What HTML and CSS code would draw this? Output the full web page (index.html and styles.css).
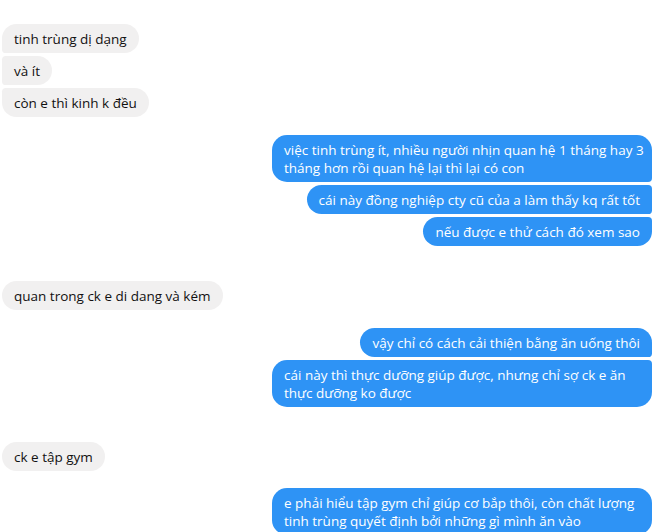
FILE: index.html
```html
<!DOCTYPE html>
<html lang="vi">
<head>
<meta charset="utf-8">
<link rel="stylesheet" href="styles.css">
</head>
<body>
<div class="chat">
  <div class="group them g1">
    <div class="msg">tinh trùng dị dạng</div>
    <div class="msg">và ít</div>
    <div class="msg">còn e thì kinh k đều</div>
  </div>
  <div class="group me g2">
    <div class="msg wide">việc tinh trùng ít, nhiều người nhịn quan hệ 1 tháng hay 3<br>tháng hơn rồi quan hệ lại thì lại có con</div>
    <div class="msg">cái này đồng nghiệp cty cũ của a làm thấy kq rất tốt</div>
    <div class="msg">nếu được e thử cách đó xem sao</div>
  </div>
  <div class="group them g3">
    <div class="msg">quan trong ck e di dang và kém</div>
  </div>
  <div class="group me g4">
    <div class="msg">vậy chỉ có cách cải thiện bằng ăn uống thôi</div>
    <div class="msg wide">cái này thì thực dưỡng giúp được, nhưng chỉ sợ ck e ăn<br>thực dưỡng ko được</div>
  </div>
  <div class="group them g5">
    <div class="msg">ck e tập gym</div>
  </div>
  <div class="group me g6">
    <div class="msg wide">e phải hiểu tập gym chỉ giúp cơ bắp thôi, còn chất lượng<br>tinh trùng quyết định bởi những gì mình ăn vào</div>
  </div>
</div>
</body>
</html>
```
FILE: styles.css
```css
html, body {
  margin: 0;
  padding: 0;
  background: #ffffff;
  overflow: hidden;
}
.chat {
  display: flex;
  flex-direction: column;
  padding: 24px 4px 0 2px;
  font-family: "Open Sans", "Noto Sans", sans-serif;
  font-size: 13.5px;
  line-height: 18px;
}
.group {
  display: flex;
  flex-direction: column;
  gap: 3px;
}
.them { align-items: flex-start; }
.me { align-items: flex-end; }
.msg {
  padding: 6px 12px 5px;
  white-space: nowrap;
  border-radius: 15px;
  box-sizing: border-box;
}
.msg.wide {
  width: 380px;
}
.them .msg {
  background: #f1f0f0;
  color: #111111;
  border-top-left-radius: 4px;
  border-bottom-left-radius: 4px;
}
.them .msg:first-child { border-top-left-radius: 15px; }
.them .msg:last-child { border-bottom-left-radius: 15px; }
.me .msg {
  background: #2e93f5;
  color: #ffffff;
  border-top-right-radius: 4px;
  border-bottom-right-radius: 4px;
}
.me .msg:first-child { border-top-right-radius: 15px; }
.me .msg:last-child { border-bottom-right-radius: 15px; }
.g2 { margin-top: 18px; }
.g3 { margin-top: 35px; }
.g4 { margin-top: 18px; }
.g5 { margin-top: 35px; }
.g6 { margin-top: 17px; }
```
